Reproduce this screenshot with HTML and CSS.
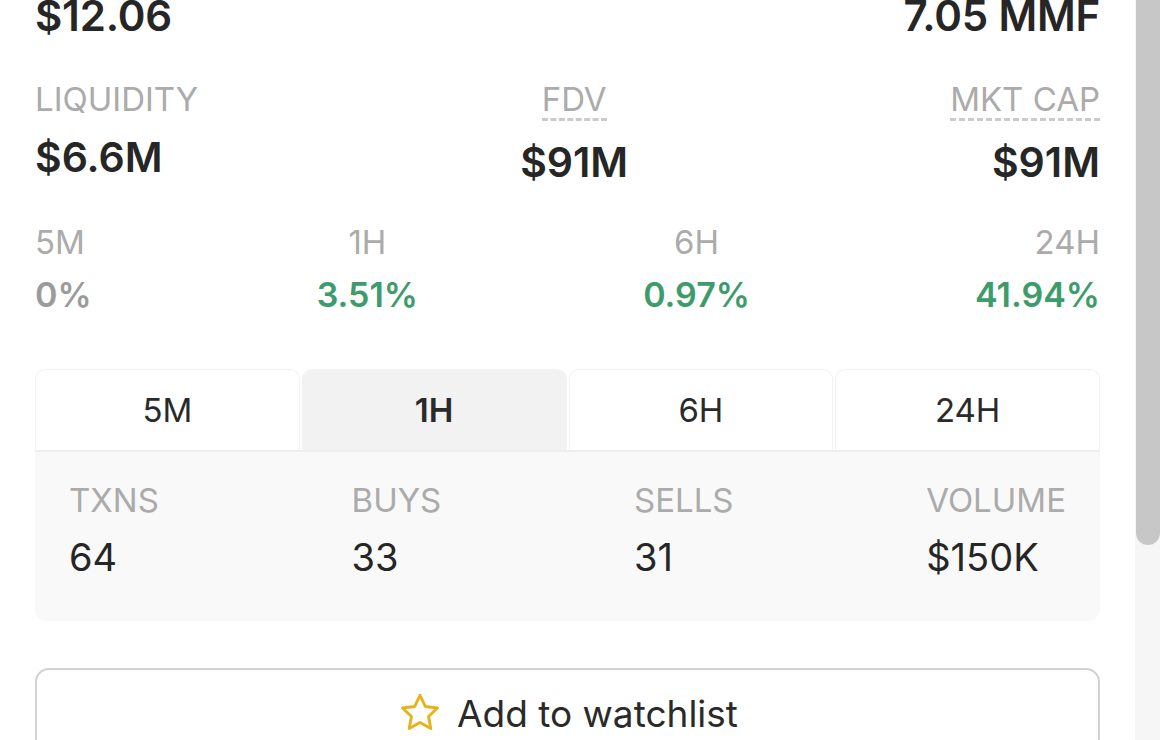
FILE: index.html
```html
<!DOCTYPE html>
<html>
<head>
<meta charset="utf-8">
<link rel="stylesheet" href="styles.css">
</head>
<body>
<div class="page">
  <main class="content">
    <div class="row top-row">
      <div class="big">$12.06</div>
      <div class="big">7.05 MMF</div>
    </div>

    <div class="row stats-row">
      <div class="stat left">
        <div class="label">LIQUIDITY</div>
        <div class="value">$6.6M</div>
      </div>
      <div class="stat center">
        <div class="label dashed">FDV</div>
        <div class="value">$91M</div>
      </div>
      <div class="stat right">
        <div class="label dashed">MKT CAP</div>
        <div class="value">$91M</div>
      </div>
    </div>

    <div class="row change-row">
      <div class="stat left">
        <div class="label">5M</div>
        <div class="pct neutral">0%</div>
      </div>
      <div class="stat center">
        <div class="label">1H</div>
        <div class="pct up">3.51%</div>
      </div>
      <div class="stat center">
        <div class="label">6H</div>
        <div class="pct up">0.97%</div>
      </div>
      <div class="stat right">
        <div class="label">24H</div>
        <div class="pct up">41.94%</div>
      </div>
    </div>

    <div class="tabs">
      <div class="tab">5M</div>
      <div class="tab active">1H</div>
      <div class="tab">6H</div>
      <div class="tab">24H</div>
    </div>
    <div class="panel">
      <div class="cell">
        <div class="plabel">TXNS</div>
        <div class="pvalue">64</div>
      </div>
      <div class="cell">
        <div class="plabel">BUYS</div>
        <div class="pvalue">33</div>
      </div>
      <div class="cell">
        <div class="plabel">SELLS</div>
        <div class="pvalue">31</div>
      </div>
      <div class="cell">
        <div class="plabel">VOLUME</div>
        <div class="pvalue">$150K</div>
      </div>
    </div>

    <button class="watch">
      <svg class="star" viewBox="0 0 24 24" width="46" height="46">
        <path d="M12 2.8l2.75 5.8 6.35.8-4.65 4.4 1.2 6.3L12 17l-5.65 3.1 1.2-6.3L2.9 9.4l6.35-.8z" fill="none" stroke="#e8b21c" stroke-width="1.5" stroke-linejoin="round"/>
      </svg>
      <span>Add to watchlist</span>
    </button>
  </main>
  <div class="scrolltrack"><div class="thumb"></div></div>
</div>
</body>
</html>
```

FILE: styles.css
```css
* { box-sizing: border-box; }
html, body {
  margin: 0;
  padding: 0;
  background: #ffffff;
  overflow: hidden;
  height: 740px;
}
body {
  font-family: Inter, "Noto Sans", "Liberation Sans", sans-serif;
  color: #262626;
}
.page {
  display: flex;
  height: 740px;
}
.content {
  flex: 1;
  padding: 0 35px 0 35px;
  display: flex;
  flex-direction: column;
}
.content > * { flex-shrink: 0; }
.scrolltrack {
  width: 25px;
  background: #f6f6f6;
  padding-left: 1px;
}
.thumb {
  height: 545px;
  background: #c7c7c7;
  border-radius: 0 0 12px 12px;
}
.row {
  display: flex;
  justify-content: space-between;
}
.top-row {
  margin-top: -10px;
}
.big {
  font-size: 42px;
  font-weight: 600;
  line-height: 52px;
  letter-spacing: -0.2px;
}
.stat { display: flex; flex-direction: column; }
.stat.left { align-items: flex-start; text-align: left; }
.stat.center { align-items: center; text-align: center; }
.stat.right { align-items: flex-end; text-align: right; }
.stats-row { margin-top: 36px; }
.label {
  font-size: 33px;
  line-height: 42px;
  color: #ababab;
  font-weight: 400;
}
.label.dashed {
  border-bottom: 3px dashed #cbcbcb;
  line-height: 38px;
  margin-top: 2px;
  margin-bottom: 4px;
}
.value {
  font-size: 41px;
  font-weight: 600;
  line-height: 52px;
  margin-top: 11px;
}
.change-row { margin-top: 33px; }
.pct {
  font-size: 34px;
  font-weight: 600;
  line-height: 44px;
  margin-top: 10px;
}
.pct.neutral { color: #9b9b9b; }
.pct.up { color: #3d9b6c; }

.tabs {
  display: flex;
  gap: 2px;
  margin-top: 52px;
  border-bottom: 2px solid #eeeeee;
}
.tab {
  flex: 1;
  height: 81px;
  display: flex;
  align-items: center;
  justify-content: center;
  font-size: 33px;
  color: #2a2a2a;
  border: 1px solid #f2f2f2;
  border-bottom: none;
  border-radius: 10px 10px 0 0;
  background: #ffffff;
}
.tab.active {
  background: #f2f2f2;
  border-color: #f2f2f2;
  font-weight: 600;
}
.panel {
  background: #f9f9f9;
  border-radius: 0 0 12px 12px;
  height: 169px;
  padding: 26px 34px 0 34px;
  display: flex;
  justify-content: space-between;
}
.cell { display: flex; flex-direction: column; }
.plabel {
  font-size: 33px;
  line-height: 44px;
  color: #ababab;
}
.pvalue {
  font-size: 38px;
  line-height: 46px;
  margin-top: 12px;
  color: #262626;
}
.watch {
  margin-top: 47px;
  height: 90px;
  border: 2px solid #d2d2d2;
  border-radius: 14px;
  background: #ffffff;
  display: flex;
  align-items: center;
  justify-content: center;
  gap: 14px;
  padding: 0;
  font-family: Inter, "Noto Sans", "Liberation Sans", sans-serif;
  font-size: 37px;
  color: #2a2a2a;
}
.star { display: block; }
```
